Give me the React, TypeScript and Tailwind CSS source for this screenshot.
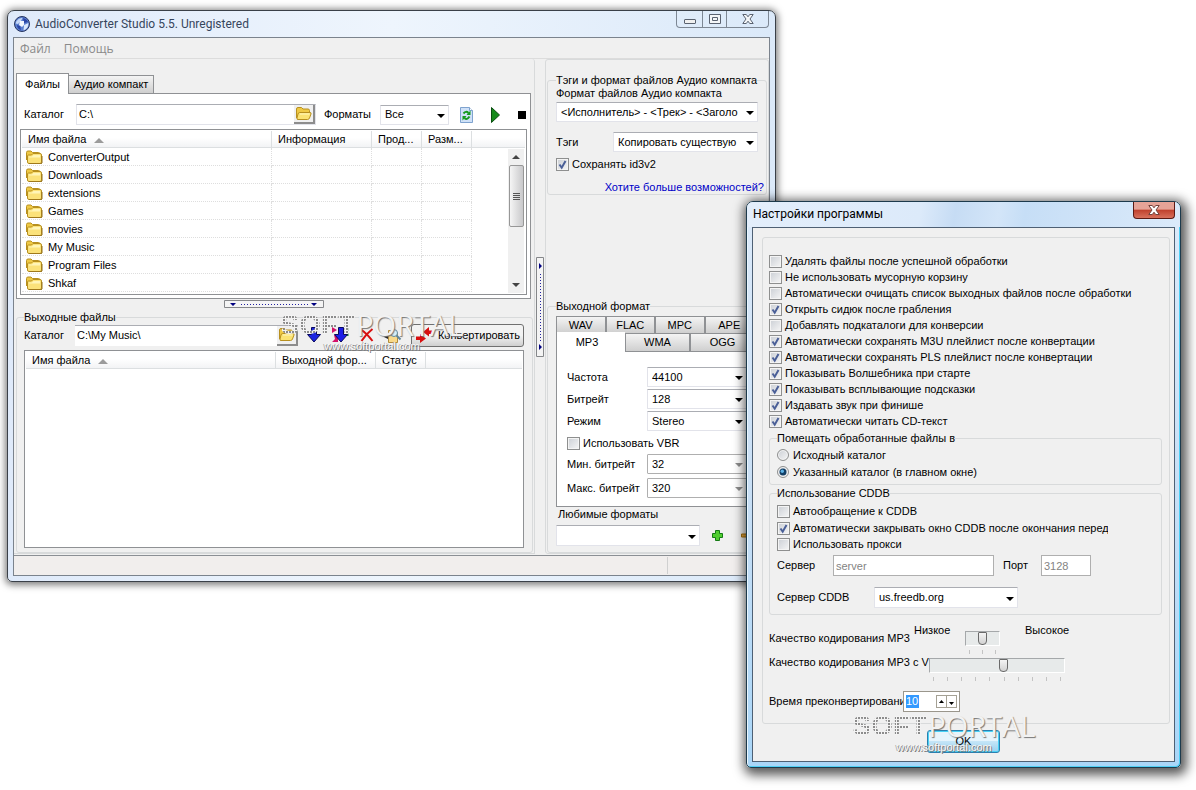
import React, { useId } from "react";

const TEXT = "font-['Liberation_Sans',Arial,sans-serif] text-[11px] leading-[13px] text-black";

function Folder({ open = false }: { open?: boolean }) {
  return open ? (
    <svg viewBox="0 0 17 15" className="h-[15px] w-[17px] shrink-0" aria-hidden="true">
      <path d="M1.500 12V3q0-1.500 1.500-1.500h3.500L8 3h5q1.500 0 1.500 1.500V7" fill="#efc944" stroke="#b8901f" />
      <path d="M4.500 6.500H15q1.500 0 1 1.500l-1.500 4q-.5 1.500-2 1.500H3q-1.500 0-1-1.500l1-4q.5-1.500 1.500-1.500z" fill="#fbe373" stroke="#b8901f" />
      <path d="M5 8h9.500" stroke="#fff7c2" />
    </svg>
  ) : (
    <svg viewBox="0 0 17 14" className="h-[14px] w-[17px] shrink-0" aria-hidden="true">
      <path d="M.5 10V2.500Q.5 1 2 1h3l1.500 1.500h6q1.500 0 1.500 1.500v2" fill="#efc944" stroke="#b8901f" />
      <path d="M1.500 12V6q0-1 1-1h3L7 3.500h7q1.500 0 1.500 1.500v7q0 1.500-1.500 1.500H3Q1.500 13.500 1.500 12z" fill="#fbe27a" stroke="#b8901f" />
      <path d="M3 6.500h3L7.500 5H14v2.500H3z" fill="#fff5b8" />
      <path d="M16 6v7l-1 .8H3" fill="none" stroke="#94701a" />
    </svg>
  );
}

function Caret({ dim = false }: { dim?: boolean }) {
  return (
    <svg viewBox="0 0 8 4" className="pointer-events-none absolute top-1/2 right-1 h-1 w-2 -translate-y-px" aria-hidden="true">
      <path d="M0 0h8L4 4z" fill={dim ? "#8d8d8d" : "#000"} />
    </svg>
  );
}

function Drop({ value, label, id, className = "", disabled = false, tall = false }: {
  value: string; label?: string; id?: string; className?: string; disabled?: boolean; tall?: boolean;
}) {
  return (
    <span className={`relative block ${className}`}>
      <select
        id={id}
        aria-label={label}
        disabled={disabled}
        className={`block w-full appearance-none rounded-[1px] border bg-white pr-3 pl-1 text-black opacity-100 outline-none ${
          tall ? "h-[21px]" : "h-5"
        } ${disabled ? "border-[#afafaf]" : "border-[#e2e3ea] border-t-[#abadb3]"}`}
      >
        <option>{value}</option>
      </select>
      <Caret dim={disabled} />
    </span>
  );
}

function Check({ label, checked = false, clip = "" }: { label: string; checked?: boolean; clip?: string }) {
  return (
    <label className="flex h-4 items-center gap-[3px] whitespace-nowrap">
      <span className="grid shrink-0">
        <input
          type="checkbox"
          defaultChecked={checked}
          className="peer col-start-1 row-start-1 size-[13px] appearance-none border border-[#8e8f8f] bg-linear-to-br from-[#cbcfd5] to-[#f6f6f6] shadow-[inset_0_0_0_1px_#f4f4f4]"
        />
        <svg viewBox="0 0 13 13" className="pointer-events-none col-start-1 row-start-1 size-[13px] opacity-0 peer-checked:opacity-100" aria-hidden="true">
          <path d="M3.500 6.500l2.200 3.200L9.500 3" fill="none" stroke="#4a5f97" strokeWidth="2" />
        </svg>
      </span>
      <span className={clip}>{label}</span>
    </label>
  );
}

function Radio({ label, checked = false }: { label: string; checked?: boolean }) {
  return (
    <label className="flex h-4 items-center gap-1 whitespace-nowrap">
      <span className="grid shrink-0">
        <input
          type="radio"
          name="target"
          defaultChecked={checked}
          className="peer col-start-1 row-start-1 size-3 appearance-none rounded-full border border-[#8e8f8f] bg-linear-to-br from-[#cbcfd5] to-[#f6f6f6] shadow-[inset_0_0_0_1px_#f4f4f4]"
        />
        <svg viewBox="0 0 12 12" className="pointer-events-none col-start-1 row-start-1 size-3 opacity-0 peer-checked:opacity-100" aria-hidden="true">
          <circle cx="6" cy="6" r="3.500" fill="#123f66" />
          <circle cx="5.300" cy="5.300" r="1.700" fill="#5db2e6" />
        </svg>
      </span>
      {label}
    </label>
  );
}

function Group({ title, className = "", children }: { title: string; className?: string; children: React.ReactNode }) {
  return (
    <fieldset className={`min-w-0 rounded-[3px] border border-[#d8dadb] ${className}`}>
      <legend>{title}</legend>
      {children}
    </fieldset>
  );
}

function SortMark() {
  return (
    <svg viewBox="0 0 10 5" className="ml-2 inline-block h-[5px] w-[10px] align-middle" aria-hidden="true">
      <path d="M5 0l5 5H0z" fill="#9b9b9b" />
    </svg>
  );
}

const TH = "h-[17px] truncate border-r border-b border-[#dcdfe1] px-[6px] pt-px text-left font-normal";
const TD = "h-[18px] border-r border-b border-dotted border-[#dedede] p-0";

const FOLDERS = ["ConverterOutput", "Downloads", "extensions", "Games", "movies", "My Music", "Program Files", "Shkaf"];

function FileTable() {
  return (
    <div className="flex h-[166px] overflow-hidden border border-[#8f9194] bg-white p-px">
      <div className="relative flex min-w-0 grow flex-col">
        <table className="w-full table-fixed border-separate border-spacing-0">
          <colgroup>
            <col className="w-[250px]" />
            <col className="w-[100px]" />
            <col className="w-[50px]" />
            <col className="w-[50px]" />
            <col />
          </colgroup>
          <thead className="bg-linear-to-b from-white from-40% to-[#f1f2f4]">
            <tr>
              <th className={TH}>Имя файла<SortMark /></th>
              <th className={TH}>Информация</th>
              <th className={TH}>Прод...</th>
              <th className={TH}>Разм...</th>
              <th className="border-b border-[#dcdfe1]" aria-label="Пусто" />
            </tr>
          </thead>
          <tbody>
            {FOLDERS.map((name) => (
              <tr key={name}>
                <td className={TD}>
                  <span className="flex items-center gap-[5px] pt-px pl-1"><Folder />{name}</span>
                </td>
                <td className={TD} />
                <td className={TD} />
                <td className={TD} />
                <td />
              </tr>
            ))}
          </tbody>
        </table>
        <div className="absolute top-[18px] right-px bottom-0 flex w-4 flex-col items-center bg-[#f0f0f0]">
          <svg viewBox="0 0 8 4" className="my-[6px] h-1 w-2 shrink-0" aria-hidden="true"><path d="M4 0l4 4H0z" fill="#444" /></svg>
          <span className="flex h-[62px] w-[15px] flex-col items-center justify-center gap-px rounded-[2px] border border-[#979797] bg-linear-to-r from-[#f5f5f5] to-[#c9c9cb]">
            <i className="h-px w-[7px] bg-[#555]" />
            <i className="h-px w-[7px] bg-[#555]" />
            <i className="h-px w-[7px] bg-[#555]" />
            <i className="h-px w-[7px] bg-[#555]" />
          </span>
          <svg viewBox="0 0 8 4" className="mt-auto mb-[6px] h-1 w-2 shrink-0" aria-hidden="true"><path d="M0 0h8L4 4z" fill="#444" /></svg>
        </div>
      </div>
    </div>
  );
}

function OutputTable() {
  return (
    <div className="mt-1 h-[198px] border border-[#8f9194] bg-white p-px">
      <table className="w-full table-fixed border-separate border-spacing-0">
        <colgroup>
          <col className="w-[250px]" />
          <col className="w-[100px]" />
          <col className="w-[50px]" />
          <col />
        </colgroup>
        <thead className="bg-linear-to-b from-white from-40% to-[#f1f2f4]">
          <tr>
            <th className={TH}>Имя файла<SortMark /></th>
            <th className={TH}>Выходной фор...</th>
            <th className={TH}>Статус</th>
            <th className="border-b border-[#dcdfe1]" aria-label="Пусто" />
          </tr>
        </thead>
      </table>
    </div>
  );
}

function FolderButton({ label }: { label: string }) {
  return (
    <button aria-label={label} className="flex w-[21px] shrink-0 items-center justify-center border-r-2 border-b-2 border-[#8d8d8d] bg-[#f0f0f0]">
      <Folder open />
    </button>
  );
}

const TAB = "flex items-center justify-center border border-b-0 border-[#8f9194] bg-linear-to-b from-[#f4f4f4] to-[#cfcfcf]";

function FilesPanel() {
  return (
    <>
      <div className="flex items-end" role="tablist">
        <button role="tab" aria-selected="true" className="relative z-10 -mb-px h-[21px] w-[53px] border border-b-0 border-[#8f9194] bg-white">Файлы</button>
        <button role="tab" aria-selected="false" className={`${TAB} h-[18px] w-[85px] border-l-0`}>Аудио компакт</button>
      </div>
      <div className="border border-[#8f9194] bg-white px-[3px] pt-[10px] pb-[3px]">
        <div className="mb-1 flex h-[21px] items-center">
          <label htmlFor="src" className="w-[56px] pl-1">Каталог</label>
          <span className="flex h-[21px] w-[240px] border border-[#e2e3ea] border-t-[#abadb3]">
            <input id="src" defaultValue="C:\" className="min-w-0 grow px-[2px] outline-none" />
            <FolderButton label="Выбрать каталог" />
          </span>
          <label htmlFor="formats" className="ml-2 w-[56px]">Форматы</label>
          <Drop id="formats" value="Все" className="w-[69px]" />
          <div className="flex grow items-center justify-between pr-px pl-[11px]">
            <button aria-label="Обновить">
              <svg viewBox="0 0 13 16" className="h-4 w-[13px]" aria-hidden="true">
                <path d="M.5.5h9l3 3v12H.5z" fill="#cfe1f8" stroke="#7fa3cf" />
                <path d="M9.500.5v3h3" fill="#fff" stroke="#7fa3cf" />
                <path d="M3.500 6.500q2.500-3 5-.5M9.500 9.500q-2.500 4-5 1.500" fill="none" stroke="#149a1e" strokeWidth="2" />
                <path d="M10.500 3.500v4.500H6.500zM2.500 13.500V9h4z" fill="#149a1e" />
              </svg>
            </button>
            <button aria-label="Воспроизвести">
              <svg viewBox="0 0 9 16" className="h-4 w-[9px]" aria-hidden="true"><path d="M.5.5L8.500 8 .5 15.500z" fill="#158a1a" stroke="#0a4d10" /></svg>
            </button>
            <button aria-label="Стоп" className="size-2 bg-black" />
          </div>
        </div>
        <FileTable />
      </div>
    </>
  );
}

const ARROW_DOWN = "M4.500.5h5v7h4L7 15 .5 7.500h4z";

function OutputPanel() {
  return (
    <Group title="Выходные файлы" className="mt-[3px] mr-[-2px] pr-2 pb-1 pl-[7px]">
      <div className="flex h-[22px] items-center">
        <label htmlFor="out" className="w-[51px] shrink-0">Каталог</label>
        <span className="flex h-[21px] w-[223px] shrink-0 border-t border-[#abadb3] bg-white">
          <input id="out" defaultValue="C:\My Music\" className="min-w-0 grow px-[2px] outline-none" />
          <FolderButton label="Выбрать каталог вывода" />
        </span>
        <div className="flex grow items-center justify-around px-1">
          <button aria-label="Вниз">
            <svg viewBox="0 0 14 16" className="h-4 w-[14px]" aria-hidden="true">
              <path d={ARROW_DOWN} fill="#1c25e0" stroke="#0a0a5c" />
            </svg>
          </button>
          <button aria-label="Все вниз">
            <svg viewBox="0 0 18 16" className="h-4 w-[18px]" aria-hidden="true">
              <path d="M1 0l5 3-5 3zM3 8h4v7H1l3-3z" fill="#d4126a" />
              <path d="M16.500 1v3M16.500 6v3" stroke="#1f8a3a" strokeWidth="2" />
              <path d={ARROW_DOWN} transform="translate(3 0)" fill="#1c1fe8" stroke="#0a0a5c" />
            </svg>
          </button>
          <button aria-label="Удалить">
            <svg viewBox="0 0 14 14" className="size-[14px]" aria-hidden="true"><path d="M1 1.500q6 4 11.500 11.500M12.500 1Q6 6 1.500 13" fill="none" stroke="#d80f0f" strokeWidth="2" /></svg>
          </button>
          <button aria-label="Найти">
            <svg viewBox="0 0 18 16" className="h-4 w-[18px]" aria-hidden="true">
              <path d="M4.500 3.500h6l3 3v9h-9z" fill="#f8d98a" stroke="#b18b3a" />
              <circle cx="10" cy="6" r="3.500" fill="#d5f0fb" stroke="#60869a" />
              <path d="M12.500 8.500l4 4" stroke="#60869a" strokeWidth="2" />
              <path d="M0 10l4-3v5z" fill="#222" />
            </svg>
          </button>
        </div>
        <button className="flex h-[23px] w-[113px] shrink-0 items-center justify-between rounded-[3px] border border-[#707070] bg-linear-to-b from-[#f3f3f3] from-50% to-[#cfcfcf] pr-[3px] pl-[3px]">
          <svg viewBox="0 0 18 16" className="h-4 w-[18px]" aria-hidden="true">
            <path d="M17 3.500h-3V0L8 5l6 4.500V7h3zM1 9.500h4V7l6 4.500-6 4.500v-3H1z" fill="#d80f0f" />
          </svg>
          Конвертировать
        </button>
      </div>
      <OutputTable />
    </Group>
  );
}

function Field({ label, value, disabled = false, className = "" }: { label: string; value: string; disabled?: boolean; className?: string }) {
  const id = useId();
  return (
    <div className={`flex items-center ${className}`}>
      <label htmlFor={id} className="w-20 shrink-0 whitespace-nowrap">{label}</label>
      <Drop id={id} value={value} disabled={disabled} className="w-[100px]" />
    </div>
  );
}

function SidePanel() {
  return (
    <div className="flex min-w-0 grow flex-col justify-between rounded-[3px] border border-[#d8dadb] pt-[14px] pr-px pl-px">
      <Group title="Тэги и формат файлов Аудио компакта" className="px-2">
        <label htmlFor="cdformat" className="block">Формат файлов Аудио компакта</label>
        <Drop id="cdformat" value="<Исполнитель> - <Трек> - <Заголо" className="mt-[2px]" />
        <div className="mt-[10px] flex items-center">
          <label htmlFor="tags" className="w-[57px]">Тэги</label>
          <Drop id="tags" value="Копировать существую" className="grow" />
        </div>
        <div className="mt-1"><Check label="Сохранять id3v2" checked /></div>
        <div className="mt-[9px] -mr-[6px] text-right"><a href="#more" className="text-[#0000c8]">Хотите больше возможностей?</a></div>
      </Group>
      <Group title="Выходной формат" className="pb-[6px] pl-2">
        <div className="mt-[3px] grid grid-cols-4 pr-3">
          {["WAV", "FLAC", "MPC", "APE"].map((t) => (
            <button key={t} className={`${TAB} h-[17px]`}>{t}</button>
          ))}
        </div>
        <div className="flex items-start">
          <button className="relative z-10 -mt-px -mb-px h-[20px] w-[69px] border-l border-[#8f9194] bg-white pr-2">MP3</button>
          <button className={`${TAB} h-[18px] w-[65px]`}>WMA</button>
          <button className={`${TAB} h-[18px] w-[65px]`}>OGG</button>
        </div>
        <div className="mr-1 border border-[#8f9194] bg-white pt-[15px] pb-2 pl-[10px]">
          <div className="flex flex-col gap-[2px]">
            <Field label="Частота" value="44100" />
            <Field label="Битрейт" value="128" />
            <Field label="Режим" value="Stereo" />
          </div>
          <div className="mt-1"><Check label="Использовать VBR" /></div>
          <Field label="Мин. битрейт" value="32" disabled className="mt-[3px]" />
          <Field label="Макс. битрейт" value="320" disabled className="mt-1" />
        </div>
        <label htmlFor="fav" className="mt-px block pl-[2px]">Любимые форматы</label>
        <div className="mt-1 flex items-center">
          <Drop id="fav" value="" tall className="w-36" />
          <button aria-label="Добавить" className="ml-3">
            <svg viewBox="0 0 11 11" className="size-[11px]" aria-hidden="true"><path d="M3.500.5h4v3h3v4h-3v3h-4v-3h-3v-4h3z" fill="#4fce2f" stroke="#147a14" /></svg>
          </button>
          <button aria-label="Убрать" className="ml-[18px]">
            <svg viewBox="0 0 11 11" className="size-[11px]" aria-hidden="true"><path d="M.5 4h10v3H.5z" fill="#e8a63a" stroke="#a8720f" /></svg>
          </button>
        </div>
      </Group>
    </div>
  );
}

function Dots({ vertical = false }: { vertical?: boolean }) {
  return vertical ? (
    <svg viewBox="0 0 8 100" className="h-[100px] w-2" aria-hidden="true">
      <path d="M.5.5h7v99h-7z" fill="#f4f4f4" stroke="#85878a" />
      <path d="M3 6l3 3-3 3zM3 87l3 3-3 3z" fill="#000080" />
      <path d="M4.500 17v67" stroke="#2020a0" strokeDasharray="1 2" />
    </svg>
  ) : (
    <svg viewBox="0 0 100 8" className="mx-auto mt-px h-2 w-[100px]" aria-hidden="true">
      <path d="M.5.5h99v7H.5z" fill="#f4f4f4" stroke="#85878a" />
      <path d="M6 3h6L9 6zM87 3h6l-3 3z" fill="#000080" />
      <path d="M17 4.500h67" stroke="#2020a0" strokeDasharray="1 2" />
    </svg>
  );
}

const TITLE = "font-['Roboto','Noto_Sans',sans-serif] text-[12px]";

function MainWindow() {
  return (
    <section className="absolute top-[10px] left-[7px] w-[769px] rounded-t-[7px] rounded-b-[5px] border border-[#3a4048] bg-linear-to-r from-[#dfeafa] via-[#eef5fd] to-[#dbe9f9] px-[5px] pb-[5px] shadow-[0_1px_7px_2px_rgba(0,0,0,0.5)]">
      <header className="flex h-[26px] items-start justify-between">
        <h1 className={`flex h-[26px] items-center gap-[5px] pl-px text-[#36455c] ${TITLE}`}>
          <svg viewBox="0 0 16 16" className="size-4" aria-hidden="true">
            <circle cx="8" cy="8" r="7.500" fill="#5b7fd0" stroke="#26345e" />
            <path d="M2.500 5q2.500-3.500 6-3L7 5 4 8 1.500 7.500z" fill="#c5d8f7" />
            <path d="M10 9l4.500-2q0 5.500-5 7.500z" fill="#dbe8fb" />
            <path d="M9 2q4 1 5 4l-4 1zM3 9l3 1 1 4Q3 13 3 9z" fill="#2b45a4" />
            <path d="M6 5h4v4L8 11 5 9z" fill="#f2f7ff" />
          </svg>
          AudioConverter Studio 5.5. Unregistered
        </h1>
        <div className="mr-px flex h-[17px] rounded-b-[4px] border border-t-0 border-[#7d8794]">
          <button aria-label="Свернуть" className="flex w-[25px] items-end justify-center pb-[3px]">
            <span className="h-[5px] w-3 rounded-[1px] border border-[#5a6270] bg-[#f0f0f0]" />
          </button>
          <button aria-label="Развернуть" className="flex w-[25px] items-center justify-center border-x border-[#7d8794]">
            <svg viewBox="0 0 12 10" className="h-[10px] w-3" aria-hidden="true"><path d="M.5.5h11v9H.5zM3.500 3.500h5v3h-5z" fill="#f4f6f8" stroke="#5a6270" /></svg>
          </button>
          <button aria-label="Закрыть" className="flex w-[41px] items-center justify-center">
            <svg viewBox="0 0 12 10" className="h-[10px] w-3" aria-hidden="true"><path d="M.8.5h3.500L6 2.800 7.700.5h3.500L8 5l3.200 4.500H7.700L6 7.200 4.300 9.500H.8L4 5z" fill="#f4f6f8" stroke="#5a6270" /></svg>
          </button>
        </div>
      </header>
      <div className="border border-[#7b838d] bg-[#f0f0f0]">
        <nav className="flex h-[21px] gap-[13px] border-b border-[#dcdcdc] pl-[6px] font-['Open_Sans','Noto_Sans',sans-serif] text-[12px] leading-[17px] text-[#8a8a8a]">
          <button>Файл</button>
          <button>Помощь</button>
        </nav>
        <div className="flex pb-px">
          <div className="w-[521px] rounded-tr-[3px] border-r border-b border-[#d8dadb] pt-[14px] pr-[3px] pl-[2px]">
            <FilesPanel />
            <Dots />
            <OutputPanel />
          </div>
          <div className="flex w-[10px] items-center justify-center"><Dots vertical /></div>
          <SidePanel />
        </div>
        <footer className="flex h-5 border-t border-[#8b8f94] bg-[#f1eeed] py-px">
          <span className="w-[654px] border-r border-[#d0d0d0]" />
        </footer>
      </div>
    </section>
  );
}

const OPTIONS: [string, boolean][] = [
  ["Удалять файлы после успешной обработки", false],
  ["Не использовать мусорную корзину", false],
  ["Автоматически очищать список выходных файлов после обработки", false],
  ["Открыть сидюк после грабления", true],
  ["Добавлять подкаталоги для конверсии", false],
  ["Автоматически сохранять M3U плейлист после конвертации", true],
  ["Автоматически сохранять PLS плейлист после конвертации", true],
  ["Показывать Волшебника при старте", true],
  ["Показывать всплывающие подсказки", true],
  ["Издавать звук при финише", true],
  ["Автоматически читать CD-текст", true],
];

function Quality({ id, max, value, ticks, className }: { id: string; max: number; value: number; ticks: number; className: string }) {
  return (
    <div className={`relative ${className}`}>
      <input
        id={id}
        type="range"
        min={0}
        max={max}
        defaultValue={value}
        className="block h-[15px] w-full appearance-none border border-t-[#a5a8aa] border-r-white border-b-white border-l-[#a5a8aa] bg-[#e7eaea] [&::-webkit-slider-thumb]:h-[13px] [&::-webkit-slider-thumb]:w-[9px] [&::-webkit-slider-thumb]:appearance-none [&::-webkit-slider-thumb]:rounded-t-[1px] [&::-webkit-slider-thumb]:rounded-b-[4px] [&::-webkit-slider-thumb]:border [&::-webkit-slider-thumb]:border-[#6a6a6a] [&::-webkit-slider-thumb]:bg-linear-to-b [&::-webkit-slider-thumb]:from-[#f4f4f4] [&::-webkit-slider-thumb]:to-[#d2d2d2]"
      />
      <div className="mt-1 flex h-1 justify-between px-1">
        {Array.from({ length: ticks }, (_, i) => <i key={i} className="w-px bg-[#c3c3c3]" />)}
      </div>
    </div>
  );
}

function SettingsDialog() {
  return (
    <section className="absolute top-[201px] left-[746px] w-[435px] rounded-t-[7px] rounded-b-[5px] border border-[#1d3a4c] bg-linear-to-b from-[#dceafa] via-[#c9dff5] to-[#a9d6f8] px-[5px] pb-[5px] shadow-[2px_3px_11px_4px_rgba(0,0,0,0.65),inset_-1px_-1px_0_#4fd0f5,inset_1px_0_0_#e9f6fe]">
      <header className="-mx-[5px] flex h-[25px] items-start justify-between rounded-t-[6px] bg-linear-[100deg,#e3eefb,#dceafa_40%,#c6dcf4_48%,#d3e5f8_58%,#c6def6_64%,#dbeafa] px-[5px]">
        <h2 className={`flex h-[25px] items-center pl-px text-black ${TITLE}`}>Настройки программы</h2>
        <button aria-label="Закрыть" className="flex h-[17px] w-[42px] items-center justify-center rounded-b-[4px] border border-t-0 border-[#5c1a14] bg-linear-to-b from-[#e6a397] from-45% via-[#bf3f2c] via-50% to-[#d8705c]">
          <svg viewBox="0 0 12 10" className="h-[10px] w-3" aria-hidden="true"><path d="M.8.5h3.500L6 2.800 7.700.5h3.500L8 5l3.200 4.500H7.700L6 7.200 4.300 9.500H.8L4 5z" fill="#fff" stroke="#74423c" /></svg>
        </button>
      </header>
      <div className="border border-[#4e6074] bg-[#f0f0f0] pt-[9px] pr-1 pb-2 pl-[9px]">
        <div className="rounded-[3px] border border-[#d8dadb] pt-[15px] pr-[7px] pb-[11px] pl-[6px]">
          {OPTIONS.map(([label, on]) => <Check key={label} label={label} checked={on} />)}
          <Group title="Помещать обработанные файлы в" className="mt-[3px] px-[7px] pb-1">
            <div className="mt-[2px] flex flex-col gap-px">
              <Radio label="Исходный каталог" />
              <Radio label="Указанный каталог (в главном окне)" checked />
            </div>
          </Group>
          <Group title="Использование CDDB" className="mt-[2px] px-[7px] pb-[6px]">
            <div className="mt-[3px]">
              <Check label="Автообращение к CDDB" />
              <div className="mt-px"><Check label="Автоматически закрывать окно CDDB после окончания перед" checked clip="w-[315px] overflow-hidden" /></div>
              <Check label="Использовать прокси" />
            </div>
            <div className="mt-[3px] flex items-center">
              <label htmlFor="server" className="w-14">Сервер</label>
              <input id="server" disabled defaultValue="server" className="h-[21px] w-[161px] border border-[#afafaf] bg-white px-[2px] text-[#838383]" />
              <label htmlFor="port" className="ml-[9px] w-[38px]">Порт</label>
              <input id="port" disabled defaultValue="3128" className="h-[21px] w-[50px] border border-[#afafaf] bg-white px-[2px] text-[#838383]" />
            </div>
            <div className="mt-[11px] flex items-center">
              <label htmlFor="cddb" className="w-[97px]">Сервер CDDB</label>
              <Drop id="cddb" value="us.freedb.org" tall className="w-36" />
            </div>
          </Group>
          <div className="mt-[9px] flex h-8 items-start whitespace-nowrap">
            <label htmlFor="q1" className="w-[145px] pt-2">Качество кодирования MP3</label>
            <span className="w-[51px]">Низкое</span>
            <Quality id="q1" max={2} value={1} ticks={3} className="mt-[7px] w-[35px]" />
            <span className="ml-[25px]">Высокое</span>
          </div>
          <div className="flex items-start whitespace-nowrap">
            <label htmlFor="q2" className="w-[160px]">Качество кодирования MP3 с VBR</label>
            <Quality id="q2" max={9} value={5} ticks={10} className="mt-[2px] w-[136px]" />
          </div>
          <div className="mt-[10px] flex items-center whitespace-nowrap">
            <label htmlFor="pre" className="w-[134px] overflow-hidden">Время преконвертирования</label>
            <span className="flex h-[21px] w-[57px] items-center justify-between border border-[#9a968c] bg-white px-[2px]">
              <input id="pre" defaultValue="10" className="h-[13px] w-[13px] bg-[#3399ff] text-white outline-none" />
              <span className="flex">
                <button aria-label="Больше" className="flex h-[13px] w-[11px] items-center justify-center border border-[#a5a195]">
                  <svg viewBox="0 0 5 3" className="h-[3px] w-[5px]" aria-hidden="true"><path d="M2.500 0L5 3H0z" /></svg>
                </button>
                <button aria-label="Меньше" className="-ml-px flex h-[13px] w-[11px] items-end justify-center border border-[#a5a195] pb-[2px]">
                  <svg viewBox="0 0 5 3" className="h-[3px] w-[5px]" aria-hidden="true"><path d="M0 0h5L2.500 3z" /></svg>
                </button>
              </span>
            </span>
          </div>
        </div>
        <div className="mt-[6px] flex justify-center pr-[5px]">
          <button className="h-[23px] w-[73px] rounded-[3px] border border-[#2c7fae] bg-linear-to-b from-[#e6f4fc] from-45% via-[#c4e5f7] via-50% to-[#98d1ef] shadow-[inset_0_0_0_1px_#48d1f5]">OK</button>
        </div>
      </div>
    </section>
  );
}

function Brand({ className }: { className: string }) {
  return (
    <div className={`pointer-events-none absolute flex w-[184px] flex-col items-center leading-none ${className}`}>
      <div className="flex items-center gap-px">
        <span className="bg-[conic-gradient(from_270deg_at_2px_2px,#8c8c8c_25%,#f4f4f4_0)] bg-[length:3px_3px] bg-clip-text font-['Liberation_Sans',sans-serif] text-[28px] leading-[30px] font-bold text-transparent">SOFT</span>
        <span className="font-['Open_Sans',sans-serif] text-[29px] leading-[30px] text-[#f2f2f2] [text-shadow:1px_1px_1px_#777]">PORTAL</span>
      </div>
      <span className="font-['Liberation_Sans',sans-serif] text-[11px] leading-3 text-[#f8f8f8] [text-shadow:1px_1px_0_#777,-1px_0_0_#aaa]">www.softportal.com</span>
    </div>
  );
}

export default function App() {
  return (
    <main className={`relative min-h-screen overflow-hidden bg-white ${TEXT}`}>
      <MainWindow />
      <SettingsDialog />
      <Brand className="top-[310px] left-[280px]" />
      <Brand className="top-[711px] left-[852px]" />
    </main>
  );
}
